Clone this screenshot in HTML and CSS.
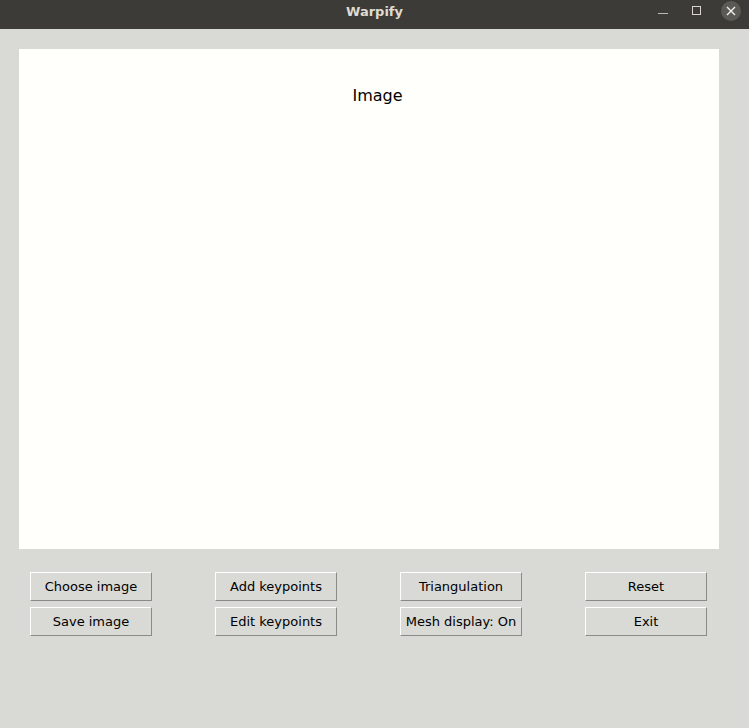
FILE: index.html
```html
<!DOCTYPE html>
<html>
<head>
<meta charset="utf-8">
<link rel="stylesheet" href="styles.css">
</head>
<body>
<div class="window">
  <header class="titlebar">
    <span class="title">Warpify</span>
    <div class="controls">
      <span class="ctl min"><svg width="10" height="10" viewBox="0 0 10 10"><line x1="0" y1="7.5" x2="10" y2="7.5" stroke="#bdbab3" stroke-width="1"/></svg></span>
      <span class="ctl max"><svg width="10" height="10" viewBox="0 0 10 10"><rect x="0.5" y="0.5" width="8" height="8" fill="none" stroke="#d8d5cf" stroke-width="1"/></svg></span>
      <span class="ctl close"><svg width="10" height="10" viewBox="0 0 10 10"><path d="M1 1L9 9M9 1L1 9" stroke="#f2f1ee" stroke-width="1.4"/></svg></span>
    </div>
  </header>
  <main class="content">
    <div class="canvas"><span class="canvas-label">Image</span></div>
    <div class="buttons">
      <button class="btn">Choose image</button>
      <button class="btn">Add keypoints</button>
      <button class="btn">Triangulation</button>
      <button class="btn">Reset</button>
      <button class="btn">Save image</button>
      <button class="btn">Edit keypoints</button>
      <button class="btn">Mesh display: On</button>
      <button class="btn">Exit</button>
    </div>
  </main>
</div>
</body>
</html>
```
FILE: styles.css
```css
html, body {
  margin: 0;
  padding: 0;
  width: 749px;
  height: 728px;
  overflow: hidden;
  background: #d9d9d6;
}
.window {
  width: 749px;
  height: 728px;
  display: flex;
  flex-direction: column;
  font-family: "DejaVu Sans", sans-serif;
}
.titlebar {
  height: 29px;
  background: #3c3b37;
  display: flex;
  align-items: center;
  justify-content: center;
  position: relative;
  flex: none;
}
.title {
  color: #dfdbd2;
  font-weight: bold;
  font-size: 13px;
  margin-top: -6px;
}
.controls {
  position: absolute;
  right: 0;
  top: 0;
  height: 22px;
  display: flex;
  align-items: center;
}
.ctl {
  display: flex;
  align-items: center;
  justify-content: center;
}
.min { width: 10px; margin-right: 24px; }
.max { width: 10px; margin-right: 19px; }
.close {
  width: 20px;
  height: 20px;
  border-radius: 50%;
  background: #5b5a56;
  margin-right: 8px;
}
.content {
  padding: 20px 30px 0 19px;
  display: flex;
  flex-direction: column;
}
.canvas {
  width: 700px;
  height: 500px;
  background: #fffffb;
  display: flex;
  justify-content: center;
}
.canvas-label {
  margin-top: 37px;
  margin-left: 17px;
  font-size: 16px;
  height: 19px;
  color: #000;
}
.buttons {
  margin-top: 23px;
  padding-left: 11px;
  display: grid;
  grid-template-columns: repeat(4, 122px);
  column-gap: 63px;
  row-gap: 6px;
}
.btn {
  width: 122px;
  height: 29px;
  box-sizing: border-box;
  margin: 0;
  padding: 0;
  background: #d9d9d6;
  border: 1px solid;
  border-color: #ffffff #8a8a88 #8a8a88 #ffffff;
  font-family: "DejaVu Sans", sans-serif;
  font-size: 13px;
  color: #000;
  text-align: center;
}
```
